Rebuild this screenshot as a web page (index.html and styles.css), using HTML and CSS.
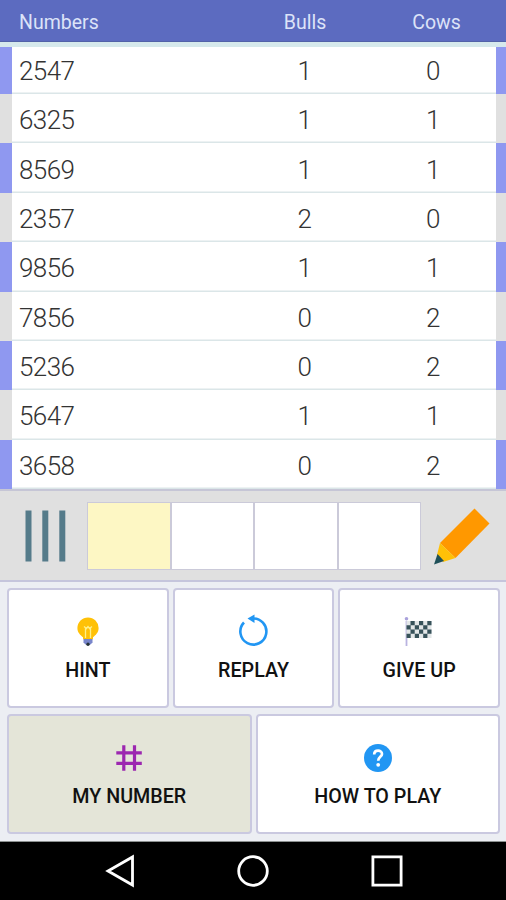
FILE: index.html
```html
<!DOCTYPE html>
<html lang="en">
<head>
    <meta charset="UTF-8">
    <meta name="viewport" content="width=device-width, initial-scale=1.0">
    <title>Bulls and Cows</title>
    <link rel="stylesheet" href="styles.css">
</head>
<body>
    <div id="game">
        <div id="head" class="cols">
            <span>Numbers</span>
            <span>Bulls</span>
            <span>Cows</span>
        </div>
        <div id="rows"></div>
        <div id="entry">
            <svg class="bars" width="42" height="52" viewBox="0 0 42 52">
                <path d="M3.500 .5v51M20.300 .5v51M37.300 .5v51" stroke="#557b8a" stroke-width="6"/>
            </svg>
            <div id="cells">
                <div class="cell active"></div>
                <div class="cell"></div>
                <div class="cell"></div>
                <div class="cell"></div>
            </div>
            <svg class="pencil" width="56" height="57" viewBox="0 0 56 57">
                <path d="M40.500 .5L55.500 15.500 21.500 50 6 35z" fill="#ff9800"/>
                <path d="M6 35L21.500 50 9 54 3 47z" fill="#ffc107"/>
                <path d="M3.500 46L10 53 0 56.500z" fill="#1f5058"/>
            </svg>
        </div>
        <div id="buttons">
            <div class="line">
                <div class="btn">
                    <svg width="30" height="30" viewBox="0 0 30 30">
                        <path d="M15 .5A10.600 10.600 0 0 0 4.400 11.100C4.400 15.800 7.500 18.300 10 20.300v2h10v-2c2.500-2 5.600-4.500 5.600-9.200A10.600 10.600 0 0 0 15 .5z" fill="#ffc107"/>
                        <path d="M11 9.500l2.500 2 1.500-2 1.500 2 2.500-2M12.500 11v10M17.500 11v10" fill="none" stroke="#fff08a" stroke-width="1.300"/>
                        <path d="M10.500 22h9v3.500l-2 2h-5l-2-2z" fill="#7986cb"/>
                        <circle cx="15" cy="27.300" r="1.700" fill="#263238"/>
                    </svg>
                    <span>HINT</span>
                </div>
                <div class="btn">
                    <svg width="30" height="30" viewBox="0 0 30 30">
                        <path d="M5 5.500A13 13 0 1 0 13 1.600" fill="none" stroke="#2196f3" stroke-width="2.600"/>
                        <path d="M8.500 1.600L15.500-2.600v8.600z" fill="#2196f3"/>
                    </svg>
                    <span>REPLAY</span>
                </div>
                <div class="btn">
                    <svg width="30" height="30" viewBox="0 0 30 30">
                        <path d="M2.500 4v25" stroke="#b9b3e0" stroke-width="1.800"/>
                        <circle cx="2.500" cy="1.700" r="1.800" fill="#aaa2dc"/>
                        <path d="M2.500 4h25v17h-25z" fill="#e3e7e8"/>
                        <path d="M6.500 4h4.200v4.200H6.500zM15 4h4.200v4.200H15zM23.300 4h4.200v4.200h-4.200zM2.500 8.200h4.200v4.200H2.500zM10.800 8.200H15v4.200h-4.200zM19.200 8.200h4.200v4.200h-4.200zM6.500 12.500h4.200v4.200H6.500zM15 12.500h4.200v4.200H15zM23.300 12.500h4.200v4.200h-4.200zM2.500 16.700h4.200v4.200H2.500zM10.800 16.700H15v4.200h-4.200zM19.200 16.700h4.200v4.200h-4.200z" fill="#37525a"/>
                    </svg>
                    <span>GIVE UP</span>
                </div>
            </div>
            <div class="line">
                <div class="btn pressed">
                    <svg width="30" height="30" viewBox="0 0 30 30">
                        <path d="M9.800 2.300v25.500M20.500 2.300v25.500M2.300 9.800h25.500M2.300 20.300h25.500" stroke="#9c27b0" stroke-width="3.200"/>
                    </svg>
                    <span>MY NUMBER</span>
                </div>
                <div class="btn">
                    <svg width="30" height="30" viewBox="0 0 30 30">
                        <circle cx="15" cy="15" r="14" fill="#2196f3"/>
                        <path d="M11.200 11.500c0-5.200 7.800-4.800 7.800-.6 0 2.900-3.800 3.100-3.800 6.800" fill="none" stroke="#fff" stroke-width="2.700"/>
                        <circle cx="15.200" cy="21.800" r="1.900" fill="#fff"/>
                    </svg>
                    <span>HOW TO PLAY</span>
                </div>
            </div>
        </div>
        <div id="nav">
            <svg width="32" height="34" viewBox="0 0 32 34">
                <path d="M28.500 3v28L4 17z" fill="none" stroke="#fff" stroke-width="2.800"/>
            </svg>
            <svg width="34" height="34" viewBox="0 0 34 34">
                <circle cx="17" cy="17" r="14.300" fill="none" stroke="#fff" stroke-width="2.800"/>
            </svg>
            <svg width="34" height="34" viewBox="0 0 34 34">
                <path d="M2.900 2.900h28.200v28.200H2.900z" fill="none" stroke="#fff" stroke-width="2.800"/>
            </svg>
        </div>
    </div>
    <script>
        var guesses = [
            ["2547", 1, 0],
            ["6325", 1, 1],
            ["8569", 1, 1],
            ["2357", 2, 0],
            ["9856", 1, 1],
            ["7856", 0, 2],
            ["5236", 0, 2],
            ["5647", 1, 1],
            ["3658", 0, 2]
        ];

        function showGuesses(){
            var clutter = "";
            guesses.forEach(function(g){
                clutter += `<div class="row cols"><span>${g[0]}</span><span>${g[1]}</span><span>${g[2]}</span></div>`
            });
            document.querySelector("#rows").innerHTML = clutter;
        }

        showGuesses();
    </script>
</body>
</html>
```
FILE: styles.css
```css
*{
    margin: 0;
    padding: 0;
    box-sizing: border-box;
    font-family: Roboto, sans-serif;
}
html,body{
    width: 100%;
    height: 100%;
}
#game{
    display: flex;
    flex-direction: column;
    width: 100%;
    height: 900px;
    overflow: hidden;
    background-color: #eceef3;
}
.cols{
    display: grid;
    grid-template-columns: 1fr 128px 129px;
    align-items: center;
}
.cols span + span{
    text-align: center;
}
#head{
    grid-template-columns: 1fr 134px 129px;
    height: 42px;
    padding: 3px 5px 0 19px;
    font-size: 19.500px;
    color: #dce3f8;
    background-color: #5c6bc0;
    border-bottom: 1px solid #5262a8;
}
#rows{
    display: flex;
    flex-direction: column;
    height: 447px;
    border-top: 5px solid #d6e9ec;
}
.row{
    flex: 1;
    padding: 3px 0 0 7px;
    font-size: 26px;
    font-weight: 300;
    letter-spacing: -0.600px;
    color: #333;
    background-color: #fff;
    border: solid #8f98f0;
    border-width: 0 10px 0 12px;
    box-shadow: inset 0 -1.500px #dbe6e8;
}
.row span + span{
    padding-left: 3px;
}
.row:first-child{
    flex: 0 0 47px;
    padding-top: 0;
}
.row:nth-child(even){
    border-color: #e0e0e0;
}
#entry{
    display: flex;
    align-items: center;
    height: 93px;
    padding: 1px 0 0 25px;
    background-color: #e0e0e0;
    border-top: 2px solid #c6c6d6;
    border-bottom: 2px solid #c5c5dc;
}
#cells{
    display: flex;
    gap: 2px;
    width: 334px;
    height: 68px;
    margin-left: 20px;
    padding: 1px;
    background-color: #cbcad9;
}
.cell{
    flex: 1;
    background-color: #fff;
}
.cell.active{
    background-color: #fdf7c4;
}
.pencil{
    margin-left: 13px;
}
#buttons{
    display: flex;
    flex-direction: column;
    gap: 6px;
    height: 260px;
    padding: 6px 6px 7px 7px;
    border-bottom: 1px solid #8c9190;
}
.line{
    display: flex;
    flex: 1;
    gap: 4px;
}
.btn{
    display: flex;
    flex: 1;
    flex-direction: column;
    align-items: center;
    gap: 12px;
    padding-top: 27px;
    font-size: 19.700px;
    font-weight: 500;
    line-height: 23px;
    color: #111;
    background-color: #fff;
    border: 2px solid #cac9e0;
    border-radius: 4px;
}
.btn svg{
    overflow: visible;
}
.pressed{
    background-color: #e4e5d8;
}
#nav{
    display: flex;
    flex: 1;
    justify-content: center;
    align-items: center;
    gap: 100px;
    padding-left: 1px;
    background-color: #000;
}
```
